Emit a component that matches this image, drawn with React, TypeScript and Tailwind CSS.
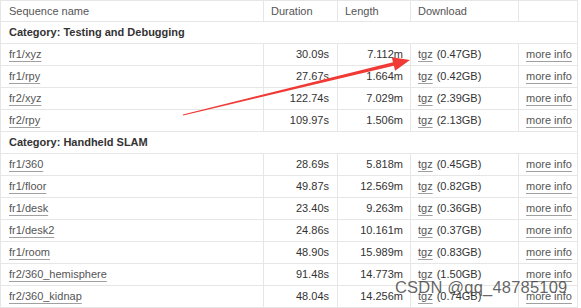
import React from "react";

type Row =
  | { kind: "cat"; label: string }
  | { kind: "seq"; name: string; dur: string; len: string; size: string };

const ROWS: Row[] = [
  { kind: "cat", label: "Category: Testing and Debugging" },
  { kind: "seq", name: "fr1/xyz", dur: "30.09s", len: "7.112m", size: "(0.47GB)" },
  { kind: "seq", name: "fr1/rpy", dur: "27.67s", len: "1.664m", size: "(0.42GB)" },
  { kind: "seq", name: "fr2/xyz", dur: "122.74s", len: "7.029m", size: "(2.39GB)" },
  { kind: "seq", name: "fr2/rpy", dur: "109.97s", len: "1.506m", size: "(2.13GB)" },
  { kind: "cat", label: "Category: Handheld SLAM" },
  { kind: "seq", name: "fr1/360", dur: "28.69s", len: "5.818m", size: "(0.45GB)" },
  { kind: "seq", name: "fr1/floor", dur: "49.87s", len: "12.569m", size: "(0.82GB)" },
  { kind: "seq", name: "fr1/desk", dur: "23.40s", len: "9.263m", size: "(0.36GB)" },
  { kind: "seq", name: "fr1/desk2", dur: "24.86s", len: "10.161m", size: "(0.37GB)" },
  { kind: "seq", name: "fr1/room", dur: "48.90s", len: "15.989m", size: "(0.83GB)" },
  { kind: "seq", name: "fr2/360_hemisphere", dur: "91.48s", len: "14.773m", size: "(1.50GB)" },
  { kind: "seq", name: "fr2/360_kidnap", dur: "48.04s", len: "14.256m", size: "(0.74GB)" },
];

const link = "underline decoration-[#a0a0a0] underline-offset-[3px] text-[#555]";

export default function App() {
  return (
    <div
      className="relative w-[581px] h-[308px] overflow-hidden bg-white text-[11px] text-[#333]"
      style={{ fontFamily: '"Liberation Sans", Arial, sans-serif' }}
    >
      <div className="w-[578px] border-t border-l border-[#e6e6e6]">
        <div className="flex h-[21px] border-b border-[#e6e6e6] text-[#555]">
          <div className="w-[263px] border-r border-[#e6e6e6] pl-2 flex items-center">Sequence name</div>
          <div className="w-[74px] border-r border-[#e6e6e6] pl-[7px] flex items-center">Duration</div>
          <div className="w-[73px] border-r border-[#e6e6e6] pl-[7px] flex items-center">Length</div>
          <div className="w-[108px] border-r border-[#e6e6e6] pl-[7px] flex items-center">Download</div>
          <div className="w-[59px] border-r border-[#e6e6e6]" />
        </div>
        {ROWS.map((r, i) =>
          r.kind === "cat" ? (
            <div key={i} className="flex h-[22px] border-b border-r border-[#e6e6e6] w-[577px] items-center pl-2 font-bold">
              {r.label}
            </div>
          ) : (
            <div key={i} className="flex h-[22px] border-b border-[#e6e6e6]">
              <div className="w-[263px] border-r border-[#e6e6e6] pl-2 flex items-center">
                <span className={link}>{r.name}</span>
              </div>
              <div className="w-[74px] border-r border-[#e6e6e6] pr-2 flex items-center justify-end">{r.dur}</div>
              <div className="w-[73px] border-r border-[#e6e6e6] pr-[7px] flex items-center justify-end">{r.len}</div>
              <div className="w-[108px] border-r border-[#e6e6e6] pl-[7px] flex items-center gap-1">
                <span className={link}>tgz</span>
                <span>{r.size}</span>
              </div>
              <div className="w-[59px] border-r border-[#e6e6e6] pl-[7px] flex items-center">
                <span className={link}>more info</span>
              </div>
            </div>
          )
        )}
      </div>

      <svg className="absolute left-0 top-0 pointer-events-none" width="581" height="308">
        <polygon points="183.1,115.6 394.9,65.5 394,62 182.9,114.4" fill="#ef3a35" />
        <polygon points="410,60 395.1,70.8 391.8,57.2" fill="#ef3a35" />
      </svg>

      <div className="absolute left-[395px] top-[279px] text-[16.5px] leading-none text-[rgba(60,60,60,0.8)] tracking-[0.2px] pointer-events-none">
        CSDN @qq_48785109
      </div>
    </div>
  );
}
